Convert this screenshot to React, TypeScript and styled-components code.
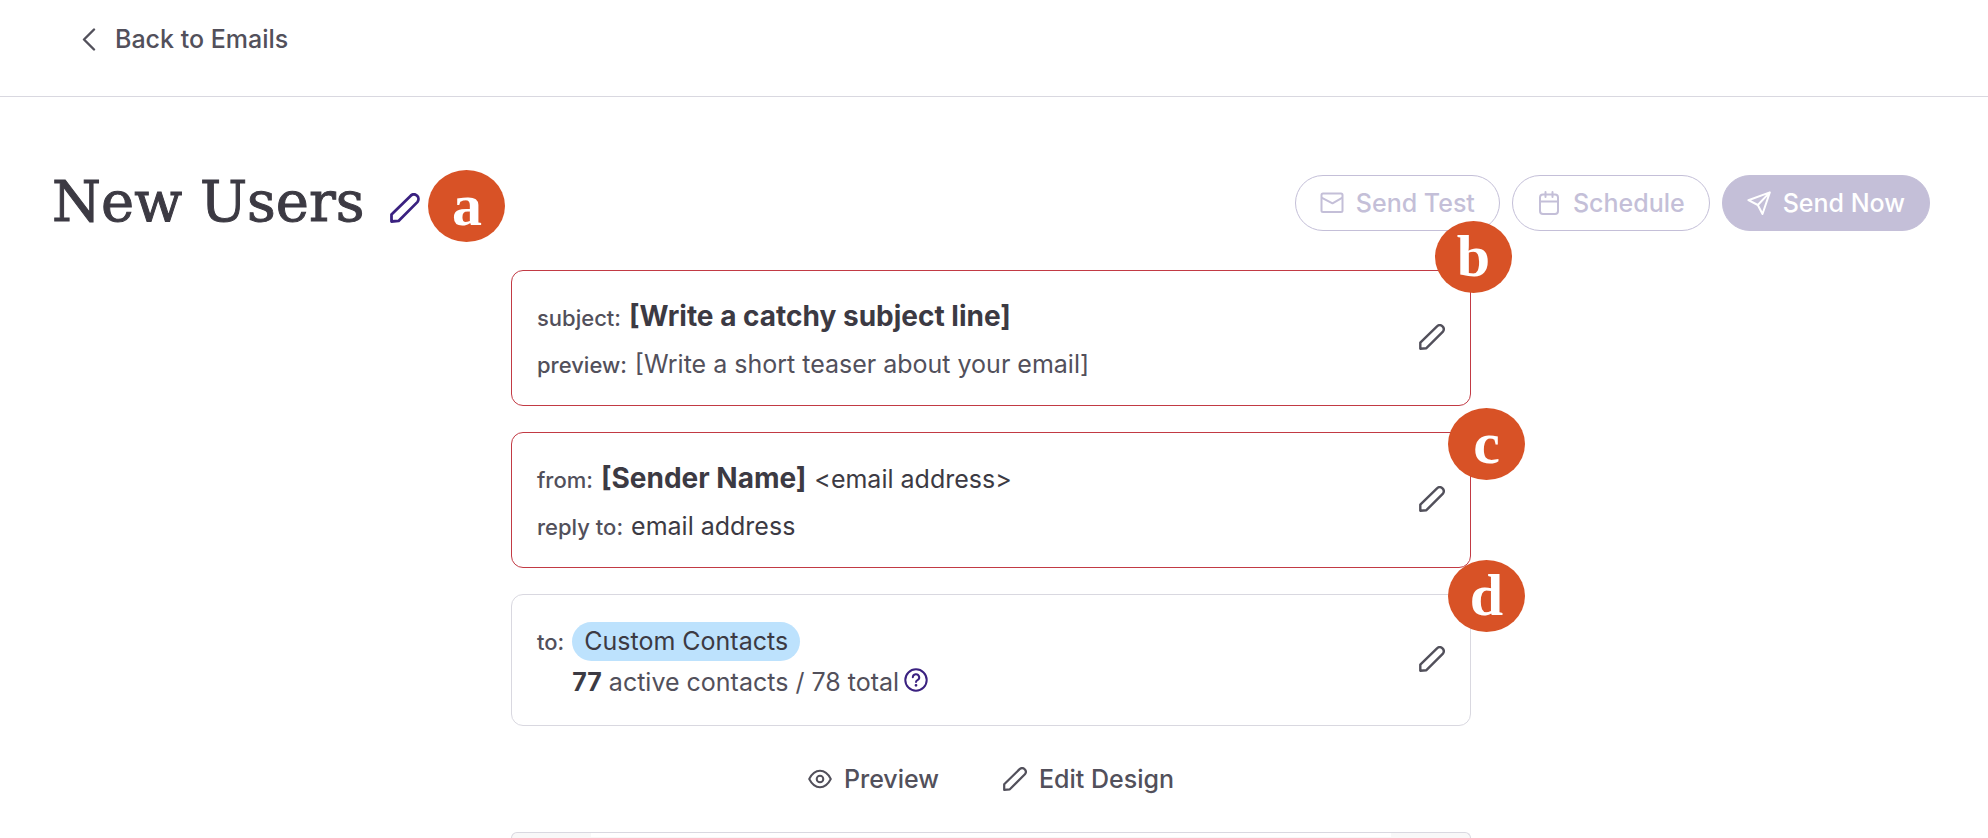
import React from 'react';
import styled, { createGlobalStyle, css } from 'styled-components';

const color = {
  ink: '#3c3a43',
  body: '#52505b',
  line: '#d9d8e0',
  error: '#c23a44',
  brand: '#3a2180',
  muted: '#c4bfd8',
  badge: '#d85226',
  chip: '#bde2fd',
};

const GlobalStyle = createGlobalStyle`
  *, *::before, *::after { box-sizing: border-box; }
  body {
    margin: 0;
    background: #fff;
    color: ${color.body};
    font-family: Inter, 'Liberation Sans', sans-serif;
    font-size: 25px;
    line-height: 32px;
  }
  button { font: inherit; color: inherit; background: none; border: 0; padding: 0; cursor: pointer; }
  svg { display: block; flex: none; fill: none; stroke: currentColor; stroke-linecap: round; stroke-linejoin: round; }
`;

const Page = styled.div`
  display: flex;
  flex-direction: column;
  min-height: 100vh;
`;

const TopBar = styled.header`
  display: flex;
  padding: 23px 78px 41px;
  border-bottom: 1px solid ${color.line};
`;

const BackLink = styled.a`
  display: flex;
  align-items: center;
  gap: 14px;
  color: ${color.body};
  font-weight: 500;
  text-decoration: none;
`;

const Main = styled.main`
  flex: 1;
  display: flex;
  flex-direction: column;
  padding: 64px 58px 0 52px;
`;

const Heading = styled.div`
  display: flex;
  align-items: center;
  justify-content: space-between;
  height: 84px;
`;

const TitleGroup = styled.div`
  position: relative;
  display: flex;
  align-items: center;
  gap: 26px;
  padding-bottom: 2px;
`;

const Title = styled.h1`
  margin: 0;
  color: ${color.ink};
  font: 400 56px/72px 'DejaVu Serif', serif;
  -webkit-text-stroke: 1px currentColor;
`;

const IconButton = styled.button`
  display: flex;
`;

const TitleEdit = styled(IconButton)`
  padding-top: 12px;
  color: ${color.brand};
`;

const HelpButton = styled(IconButton)`
  padding-bottom: 4px;
  color: ${color.brand};
`;

const Actions = styled.div`
  display: flex;
  gap: 12px;
`;

const ActionButton = styled.button<{ $filled?: boolean }>`
  display: flex;
  align-items: center;
  gap: 12px;
  height: 56px;
  padding: 0 24px;
  border: 1px solid ${color.muted};
  border-radius: 28px;
  font-weight: 500;
  color: ${p => (p.$filled ? '#fff' : color.muted)};
  background: ${p => (p.$filled ? color.muted : '#fff')};
`;

const Column = styled.div`
  flex: 1;
  display: flex;
  flex-direction: column;
  width: 100%;
  max-width: 960px;
  margin: 25px auto 0;
`;

const Cards = styled.div`
  display: flex;
  flex-direction: column;
  gap: 26px;
`;

const Card = styled.section<{ $error?: boolean }>`
  position: relative;
  display: flex;
  align-items: center;
  justify-content: space-between;
  padding: 0 25px 2px;
  border: 1px solid ${p => (p.$error ? color.error : color.line)};
  border-radius: 12px;
`;

const Lines = styled.div`
  display: flex;
  flex-direction: column;
  gap: 10px;
  padding: 27px 0 20px;
`;

const Line = styled.div`
  display: flex;
  align-items: baseline;
  gap: 8px;
  line-height: 36px;
`;

const Label = styled.span`
  font-size: 22px;
  font-weight: 500;
`;

const Strong = styled.strong`
  color: ${color.ink};
  font-size: 28px;
  font-weight: 700;
`;

const Value = styled.span<{ $dark?: boolean }>`
  color: ${p => (p.$dark ? color.ink : color.body)};
`;

const Audience = styled.div`
  display: flex;
  flex-direction: column;
  align-items: flex-start;
`;

const Chip = styled.span`
  padding: 0 12px;
  border-radius: 20px;
  background: ${color.chip};
  color: ${color.ink};
  line-height: 39px;
`;

const Counts = styled.div`
  display: flex;
  align-items: center;
  gap: 5px;
  line-height: 42px;

  strong { color: ${color.ink}; }
`;

const Badge = styled.span<{ $place: 'title' | 'first' | 'second' | 'third' }>`
  position: absolute;
  z-index: 1;
  display: flex;
  justify-content: center;
  width: 77px;
  height: 72px;
  border-radius: 50%;
  background: ${color.badge};
  color: #fff;
  font: 700 60px/70px 'Liberation Serif', serif;
  ${p => p.$place === 'title' && css`left: calc(100% + 8px); top: 4px;`}
  ${p => p.$place === 'first' && css`right: -42px; top: -50px;`}
  ${p => p.$place === 'second' && css`right: -55px; top: -25px;`}
  ${p => p.$place === 'third' && css`right: -55px; top: -35px;`}
`;

const Tools = styled.div`
  display: flex;
  justify-content: center;
  gap: 64px;
  padding: 37px 0;
`;

const ToolButton = styled.button`
  display: flex;
  align-items: center;
  gap: 12px;
  font-weight: 500;
`;

const EmailFrame = styled.div`
  flex: 1;
  padding: 0 79px;
  overflow: hidden;
  border: 1px solid ${color.line};
  border-bottom: 0;
  border-radius: 12px 12px 0 0;
  background: #f8f8f8;
`;

const EmailBody = styled.div`
  height: 100%;
  min-height: 4px;
  background: #fff;
`;

const Pencil = ({ size = 26 }: { size?: number }) => (
  <svg width={size} height={size} viewBox="0 0 26 26" strokeWidth="2.4" aria-hidden="true">
    <path d="M1.300 24.700V18.600L18 2.300C19.600.9 21.900.9 23.500 2.400C25 3.900 25 6.300 23.700 7.900L7.400 24.200Z" />
  </svg>
);

const Chevron = () => (
  <svg width="23" height="23" viewBox="0 0 23 23" strokeWidth="2.4" aria-hidden="true">
    <path d="M16 1.500 6 11.500l10 10" />
  </svg>
);

const Mail = () => (
  <svg width="24" height="24" viewBox="0 0 24 24" strokeWidth="2" aria-hidden="true">
    <rect x="1.500" y="2.500" width="21" height="18.500" rx="1.500" />
    <path d="m2 6.800 10.500 5.500L22 6.800" />
  </svg>
);

const Calendar = () => (
  <svg width="24" height="24" viewBox="0 0 24 24" strokeWidth="2" aria-hidden="true">
    <rect x="3" y="3.500" width="18" height="19.500" rx="3" />
    <path d="M3 10.500h18M8.500 1v5M15.500 1v5" />
  </svg>
);

const Plane = () => (
  <svg width="24" height="24" viewBox="0 0 24 24" strokeWidth="2" aria-hidden="true">
    <path d="M22.800 1.400 1.400 9.200 10.800 14 15.500 23ZM22.800 1.400 10.800 14" />
  </svg>
);

const Eye = () => (
  <svg width="24" height="24" viewBox="0 0 24 24" strokeWidth="2" aria-hidden="true">
    <path d="M1.200 12C4 6.500 7.500 3.800 12 3.800S20 6.500 22.800 12C20 17.500 16.500 20.200 12 20.200S4 17.500 1.200 12Z" />
    <circle cx="12" cy="12" r="3.300" />
  </svg>
);

const Help = () => (
  <svg width="24" height="24" viewBox="0 0 24 24" strokeWidth="2" aria-hidden="true">
    <circle cx="12" cy="12" r="10.700" />
    <path d="M8.800 9.300a3.200 3.200 0 1 1 4.700 2.900q-1.500.8-1.500 1.900" />
    <circle cx="12" cy="17.300" r=".7" fill="currentColor" strokeWidth="1.400" />
  </svg>
);

export default function App() {
  return (
    <Page>
      <GlobalStyle />
      <TopBar>
        <BackLink href="#emails"><Chevron />Back to Emails</BackLink>
      </TopBar>
      <Main>
        <Heading>
          <TitleGroup>
            <Title>New Users</Title>
            <TitleEdit aria-label="Edit name"><Pencil size={30} /></TitleEdit>
            <Badge $place="title">a</Badge>
          </TitleGroup>
          <Actions>
            <ActionButton><Mail />Send Test</ActionButton>
            <ActionButton><Calendar />Schedule</ActionButton>
            <ActionButton $filled><Plane />Send Now</ActionButton>
          </Actions>
        </Heading>
        <Column>
          <Cards>
            <Card $error>
              <Lines>
                <Line><Label>subject:</Label><Strong>[Write a catchy subject line]</Strong></Line>
                <Line><Label>preview:</Label><Value>[Write a short teaser about your email]</Value></Line>
              </Lines>
              <IconButton aria-label="Edit subject"><Pencil /></IconButton>
              <Badge $place="first">b</Badge>
            </Card>
            <Card $error>
              <Lines>
                <Line><Label>from:</Label><Strong>[Sender Name]</Strong><Value $dark>&lt;email address&gt;</Value></Line>
                <Line><Label>reply to:</Label><Value $dark>email address</Value></Line>
              </Lines>
              <IconButton aria-label="Edit sender"><Pencil /></IconButton>
              <Badge $place="second">c</Badge>
            </Card>
            <Card>
              <Lines>
                <Line>
                  <Label>to:</Label>
                  <Audience>
                    <Chip>Custom Contacts</Chip>
                    <Counts>
                      <span><strong>77</strong> active contacts / 78 total</span>
                      <HelpButton aria-label="About contacts"><Help /></HelpButton>
                    </Counts>
                  </Audience>
                </Line>
              </Lines>
              <IconButton aria-label="Edit recipients"><Pencil /></IconButton>
              <Badge $place="third">d</Badge>
            </Card>
          </Cards>
          <Tools>
            <ToolButton><Eye />Preview</ToolButton>
            <ToolButton><Pencil size={24} />Edit Design</ToolButton>
          </Tools>
          <EmailFrame><EmailBody /></EmailFrame>
        </Column>
      </Main>
    </Page>
  );
}
